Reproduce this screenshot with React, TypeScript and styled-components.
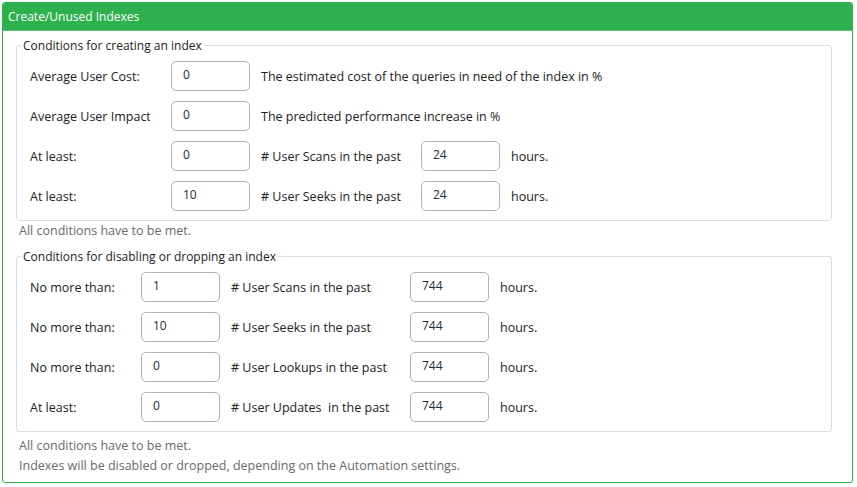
import React from "react";
import styled, { createGlobalStyle } from "styled-components";

const GlobalStyle = createGlobalStyle`
  html, body {
    margin: 0;
    padding: 0;
    background: #fff;
  }
  body {
    font-family: "Open Sans", "Noto Sans", sans-serif;
    color: #222;
  }
`;

const Panel = styled.section`
  margin: 2px;
  width: 851px;
  height: 481px;
  box-sizing: border-box;
  border: 1px solid #2cb14d;
  border-radius: 3px;
  overflow: hidden;
`;

const Header = styled.div`
  height: 27px;
  background: #2cb14d;
  border-bottom: 1px solid #5cc476;
  color: #fff;
  font-size: 12px;
  display: flex;
  align-items: center;
  padding-left: 5px;
`;

const Body = styled.div`
  padding: 6px 20px 0 13px;
`;

const Group = styled.fieldset`
  margin: 0;
  padding: 7px 0 9px 0;
  border: 1px solid #d7dee4;
  border-radius: 3px;
  display: flex;
  flex-direction: column;
  gap: 10px;
`;

const Legend = styled.legend`
  font-size: 12px;
  padding: 0 2px;
  margin-left: 4px;
  color: #222;
`;

const Row = styled.div<{ $label: number; $desc: number }>`
  display: grid;
  grid-template-columns: ${(p) => p.$label}px 79px 11px ${(p) => p.$desc}px 79px auto;
  align-items: center;
  height: 30px;
  padding-left: 13px;
  font-size: 12.5px;
`;

const Label = styled.span<{ $clip?: number }>`
  white-space: nowrap;
  overflow: hidden;
  max-width: ${(p) => (p.$clip ? `${p.$clip}px` : "none")};
`;

const Wide = styled.span`
  grid-column: 4 / 7;
  white-space: nowrap;
`;

const Hours = styled.span`
  padding-left: 11px;
  white-space: nowrap;
`;

const Field = styled.input`
  box-sizing: border-box;
  width: 79px;
  height: 30px;
  border: 1px solid #b3b3b3;
  border-radius: 5px;
  padding: 0 0 3px 11px;
  font-family: inherit;
  font-size: 12px;
  color: #1b2b3a;
  background: #fff;
  outline: none;
`;

const Gap = styled.span``;

const Note = styled.p`
  margin: 0;
  padding-left: 3px;
  font-size: 12.5px;
  color: #6a6a6a;
  line-height: 20px;
`;

const Notes = styled.div<{ $top: number; $bottom: number }>`
  padding: ${(p) => p.$top}px 0 ${(p) => p.$bottom}px;
`;

type Cond = {
  label: string;
  value: string;
  desc: string;
  hours?: string;
};

const creating: Cond[] = [
  { label: "Average User Cost:", value: "0", desc: "The estimated cost of the queries in need of the index in %" },
  { label: "Average User Impact", value: "0", desc: "The predicted performance increase in %" },
  { label: "At least:", value: "0", desc: "# User Scans in the past", hours: "24" },
  { label: "At least:", value: "10", desc: "# User Seeks in the past", hours: "24" },
];

const dropping: Cond[] = [
  { label: "No more than:", value: "1", desc: "# User Scans in the past", hours: "744" },
  { label: "No more than:", value: "10", desc: "# User Seeks in the past", hours: "744" },
  { label: "No more than:", value: "0", desc: "# User Lookups in the past", hours: "744" },
  { label: "At least:", value: "0", desc: "# User Updates\u00a0 in the past", hours: "744" },
];

const ConditionRow = ({ c, label, desc }: { c: Cond; label: number; desc: number }) => (
  <Row $label={label} $desc={desc}>
    <Label $clip={120}>{c.label}</Label>
    <Field defaultValue={c.value} />
    <Gap />
    {c.hours ? (
      <>
        <Label>{c.desc}</Label>
        <Field defaultValue={c.hours} />
        <Hours>hours.</Hours>
      </>
    ) : (
      <Wide>{c.desc}</Wide>
    )}
  </Row>
);

export default function App() {
  return (
    <>
      <GlobalStyle />
      <Panel>
        <Header>Create/Unused Indexes</Header>
        <Body>
          <Group>
            <Legend>Conditions for creating an index</Legend>
            {creating.map((c, i) => (
              <ConditionRow key={i} c={c} label={141} desc={160} />
            ))}
          </Group>
          <Notes $top={0} $bottom={7}>
            <Note>All conditions have to be met.</Note>
          </Notes>
          <Group>
            <Legend>Conditions for disabling or dropping an index</Legend>
            {dropping.map((c, i) => (
              <ConditionRow key={i} c={c} label={111} desc={179} />
            ))}
          </Group>
          <Notes $top={4} $bottom={0}>
            <Note>All conditions have to be met.</Note>
            <Note>Indexes will be disabled or dropped, depending on the Automation settings.</Note>
          </Notes>
        </Body>
      </Panel>
    </>
  );
}
